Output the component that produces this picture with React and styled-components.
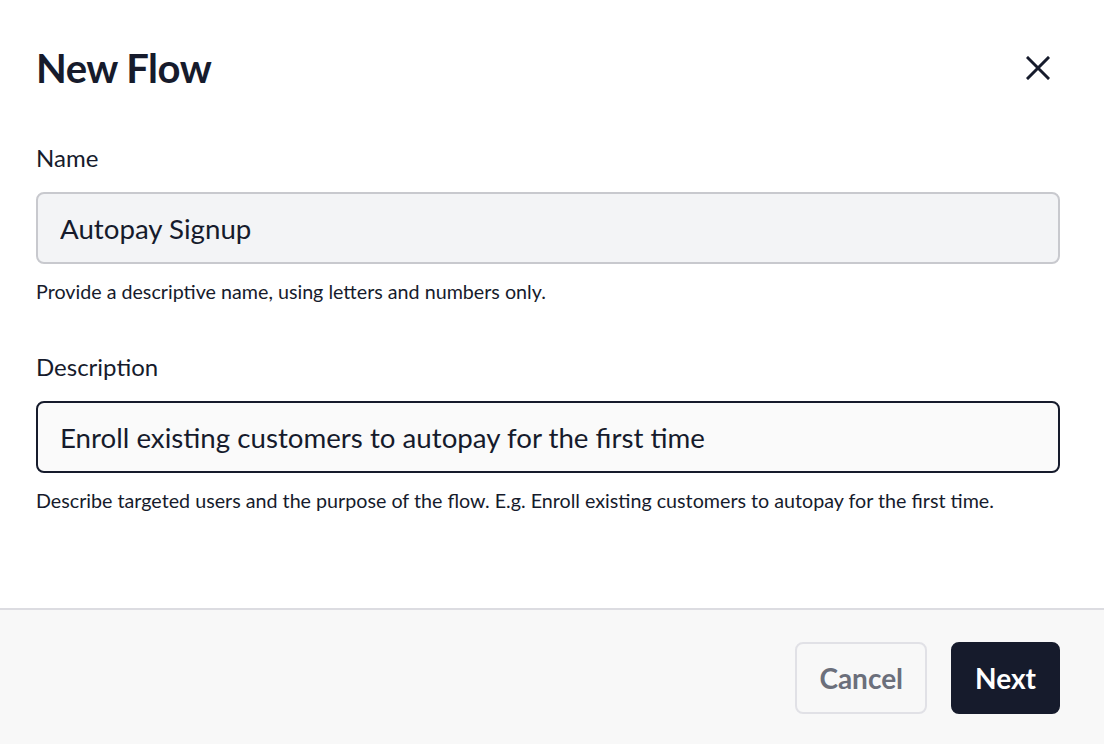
import styled, { createGlobalStyle } from 'styled-components';

const GlobalStyle = createGlobalStyle`
  html, body {
    margin: 0;
    padding: 0;
    background: #ffffff;
  }
  body {
    font-family: Lato, 'Noto Sans', sans-serif;
    color: #161b2c;
  }
  * {
    box-sizing: border-box;
  }
`;

const Dialog = styled.div`
  width: 1104px;
  height: 744px;
  display: flex;
  flex-direction: column;
  background: #ffffff;
  overflow: hidden;
`;

const Body = styled.div`
  flex: 1;
  padding: 44px 44px 0 36px;
`;

const Header = styled.div`
  display: flex;
  align-items: center;
  justify-content: space-between;
  margin-bottom: 52px;
`;

const Title = styled.h1`
  margin: 0;
  font-size: 40px;
  line-height: 48px;
  font-weight: 700;
  letter-spacing: -0.5px;
  color: #161b2c;
`;

const CloseButton = styled.button`
  display: flex;
  align-items: center;
  justify-content: center;
  width: 24px;
  height: 24px;
  margin-right: 10px;
  padding: 0;
  border: none;
  background: none;
  color: #161b2c;
  cursor: pointer;
`;

const Field = styled.div`
  display: flex;
  flex-direction: column;
  margin-bottom: ${(p) => p.$gap || 0}px;
`;

const Label = styled.label`
  font-size: 24px;
  line-height: 28px;
  margin-bottom: 20px;
  color: #161b2c;
`;

const Input = styled.input`
  height: 72px;
  width: 100%;
  padding: 0 22px;
  border-radius: 8px;
  border: 2px solid ${(p) => (p.$focused ? '#161b2c' : '#c8c9ce')};
  background: ${(p) => (p.$focused ? '#fafafa' : '#f3f4f6')};
  font-family: Lato, 'Noto Sans', sans-serif;
  font-size: 27.7px;
  color: #161b2c;
  outline: none;
`;

const Help = styled.p`
  margin: 16px 0 0;
  font-size: 19.7px;
  line-height: 24px;
  color: #161b2c;
`;

const Footer = styled.div`
  height: 136px;
  flex-shrink: 0;
  display: flex;
  justify-content: flex-end;
  align-items: flex-start;
  gap: 24px;
  padding: 32px 44px 0 36px;
  background: #f8f8f8;
  border-top: 2px solid #dcdce1;
`;

const Button = styled.button`
  height: 72px;
  padding: 0 22px;
  border-radius: 8px;
  font-family: Lato, 'Noto Sans', sans-serif;
  font-size: 28px;
  font-weight: 700;
  cursor: pointer;
  border: 2px solid ${(p) => (p.$primary ? '#161b2c' : '#e1e1e6')};
  background: ${(p) => (p.$primary ? '#161b2c' : 'transparent')};
  color: ${(p) => (p.$primary ? '#ffffff' : '#6b6f7b')};
`;

const CloseIcon = () => (
  <svg width="24" height="24" viewBox="0 0 24 24" fill="none">
    <path d="M2 2L22 22M22 2L2 22" stroke="currentColor" strokeWidth="3" strokeLinecap="square" />
  </svg>
);

export default function App() {
  return (
    <>
      <GlobalStyle />
      <Dialog>
        <Body>
          <Header>
            <Title>New Flow</Title>
            <CloseButton aria-label="Close">
              <CloseIcon />
            </CloseButton>
          </Header>
          <Field $gap={49}>
            <Label>Name</Label>
            <Input defaultValue="Autopay Signup" readOnly />
            <Help>Provide a descriptive name, using letters and numbers only.</Help>
          </Field>
          <Field>
            <Label>Description</Label>
            <Input $focused defaultValue="Enroll existing customers to autopay for the first time" readOnly />
            <Help>
              Describe targeted users and the purpose of the flow. E.g. Enroll existing customers to autopay for the
              first time.
            </Help>
          </Field>
        </Body>
        <Footer>
          <Button>Cancel</Button>
          <Button $primary>Next</Button>
        </Footer>
      </Dialog>
    </>
  );
}
